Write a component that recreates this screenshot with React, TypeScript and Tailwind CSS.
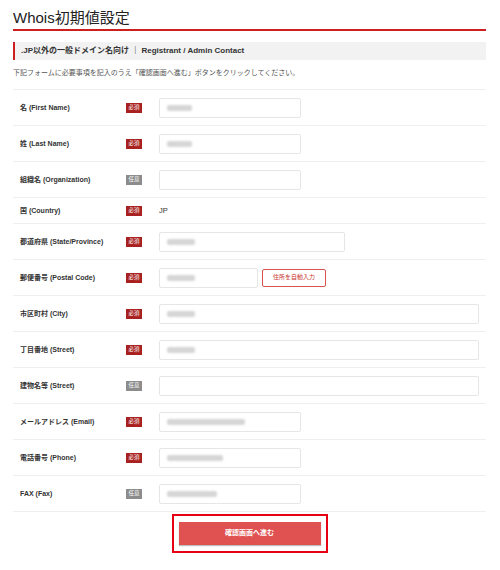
import React from 'react';

// Whois初期値設定 - フォーム画面

type Field = {
  label: string;
  required: boolean;
  kind: 'input' | 'text' | 'postal';
  width?: string;
  blur?: number;
  value?: string;
};

const fields: Field[] = [
  { label: '名 (First Name)', required: true, kind: 'input', width: 'w-[142px]', blur: 25 },
  { label: '姓 (Last Name)', required: true, kind: 'input', width: 'w-[142px]', blur: 25 },
  { label: '組織名 (Organization)', required: false, kind: 'input', width: 'w-[142px]' },
  { label: '国 (Country)', required: true, kind: 'text', value: 'JP' },
  { label: '都道府県 (State/Province)', required: true, kind: 'input', width: 'w-[186px]', blur: 28 },
  { label: '郵便番号 (Postal Code)', required: true, kind: 'postal', width: 'w-[99px]', blur: 28 },
  { label: '市区町村 (City)', required: true, kind: 'input', width: 'w-[320px]', blur: 28 },
  { label: '丁目番地 (Street)', required: true, kind: 'input', width: 'w-[320px]', blur: 28 },
  { label: '建物名等 (Street)', required: false, kind: 'input', width: 'w-[320px]' },
  { label: 'メールアドレス (Email)', required: true, kind: 'input', width: 'w-[142px]', blur: 78 },
  { label: '電話番号 (Phone)', required: true, kind: 'input', width: 'w-[142px]', blur: 56 },
  { label: 'FAX (Fax)', required: false, kind: 'input', width: 'w-[142px]', blur: 50 },
];

function Badge({ required }: { required: boolean }) {
  return (
    <span
      className={`flex items-center justify-center w-[16px] h-[10px] text-[5.5px] leading-none text-white ${
        required ? 'bg-[#a8201f]' : 'bg-[#8c8c8c]'
      }`}
    >
      {required ? '必須' : '任意'}
    </span>
  );
}

function Input({ width, blur }: { width?: string; blur?: number }) {
  return (
    <div className={`${width} h-[20px] border border-[#e6e6e6] rounded-[2px] bg-white flex items-center pl-[7px]`}>
      {blur ? (
        <span className="h-[6px] bg-[#d6d6d6] rounded-[2px] blur-[1px]" style={{ width: blur }} />
      ) : null}
    </div>
  );
}

export default function App() {
  return (
    <div
      className="w-[500px] h-[570px] bg-white text-[#333] overflow-hidden"
      style={{ fontFamily: '"Liberation Sans", "Noto Sans CJK JP", sans-serif' }}
    >
      <div className="pl-[13px] pr-[14px]">
        {/* タイトル */}
        <h1 className="pt-[9px] pb-[3px] text-[15px] leading-[17px] font-normal text-[#222] border-b-2 border-[#cc1f1f]">
          Whois初期値設定
        </h1>

        {/* セクション見出し */}
        <div className="mt-[11px] h-[18px] bg-[#f2f2f2] border-l-2 border-[#cc1f1f] flex items-center pl-[6px]">
          <span className="text-[8px] font-bold text-[#333]">
            .JP以外の一般ドメイン名向け <span className="text-[#222]">｜</span> Registrant / Admin Contact
          </span>
        </div>

        <p className="mt-[8px] text-[7px] leading-[10px] text-[#555]">
          下記フォームに必要事項を記入のうえ「確認画面へ進む」ボタンをクリックしてください。
        </p>

        {/* フォーム */}
        <div className="mt-[11px] border-t border-[#efefef]">
          {fields.map((f) => (
            <div
              key={f.label}
              className={`flex items-center border-b border-[#efefef] ${f.kind === 'text' ? 'h-[26px]' : 'h-[36px]'}`}
            >
              <div className="w-[113px] pl-[7px] text-[7px] leading-[10px] font-bold text-[#333]">{f.label}</div>
              <div className="w-[33px] flex items-center">
                <Badge required={f.required} />
              </div>
              <div className="flex items-center gap-[4px]">
                {f.kind === 'text' ? (
                  <span className="text-[7.5px] leading-[10px] text-[#333]">{f.value}</span>
                ) : (
                  <Input width={f.width} blur={f.blur} />
                )}
                {f.kind === 'postal' && (
                  <button className="w-[64px] h-[18px] border border-[#d9534f] rounded-[2px] text-[6px] text-[#c9302c] bg-white">
                    住所を自動入力
                  </button>
                )}
              </div>
            </div>
          ))}
        </div>

        {/* 確認ボタン */}
        <div className="flex justify-center mt-[2px]">
          <div className="w-[156px] h-[39px] border-2 border-[#e60012] flex items-center justify-center">
            <button className="w-[142px] h-[23px] bg-[#e05252] text-white text-[7px] font-bold shadow-[0_1px_1px_rgba(0,0,0,0.25)]">
              確認画面へ進む
            </button>
          </div>
        </div>
      </div>
    </div>
  );
}
